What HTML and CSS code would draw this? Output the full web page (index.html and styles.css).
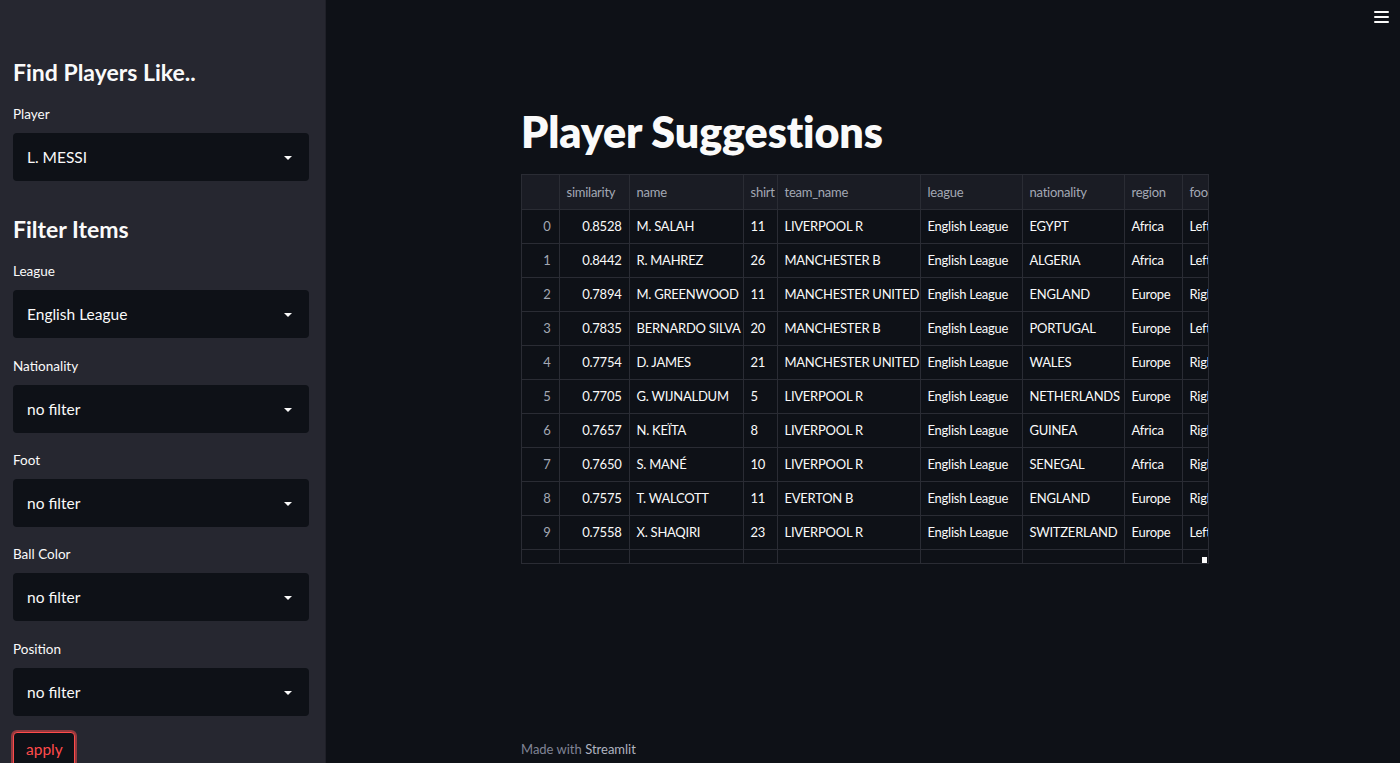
FILE: index.html
```html
<!DOCTYPE html>
<html>
<head>
<meta charset="utf-8">
<link rel="stylesheet" href="styles.css">
</head>
<body>
<div class="app">
  <aside class="sidebar">
    <h2 class="side-h">Find Players Like..</h2>
    <div class="field">
      <div class="label">Player</div>
      <div class="select"><span>L. MESSI</span><i class="caret"></i></div>
    </div>
    <h2 class="side-h side-h2">Filter Items</h2>
    <div class="field">
      <div class="label">League</div>
      <div class="select"><span>English League</span><i class="caret"></i></div>
    </div>
    <div class="field">
      <div class="label">Nationality</div>
      <div class="select"><span>no filter</span><i class="caret"></i></div>
    </div>
    <div class="field">
      <div class="label">Foot</div>
      <div class="select"><span>no filter</span><i class="caret"></i></div>
    </div>
    <div class="field">
      <div class="label">Ball Color</div>
      <div class="select"><span>no filter</span><i class="caret"></i></div>
    </div>
    <div class="field">
      <div class="label">Position</div>
      <div class="select"><span>no filter</span><i class="caret"></i></div>
    </div>
    <div class="btn-wrap"><button class="apply">apply</button></div>
  </aside>
  <main class="main">
    <div class="menu"><span></span><span></span><span></span></div>
    <div class="content">
      <h1 class="title">Player Suggestions</h1>
      <div class="table-wrap">
        <table class="df">
          <colgroup>
            <col style="width:37px"><col style="width:70px"><col style="width:114px"><col style="width:34px"><col style="width:143px"><col style="width:102px"><col style="width:102px"><col style="width:58px"><col style="width:60px">
          </colgroup>
          <thead>
            <tr><th></th><th>similarity</th><th>name</th><th>shirt</th><th>team_name</th><th>league</th><th>nationality</th><th>region</th><th>foot</th></tr>
          </thead>
          <tbody>
            <tr><td class="idx">0</td><td class="num">0.8528</td><td>M. SALAH</td><td>11</td><td>LIVERPOOL R</td><td>English League</td><td>EGYPT</td><td>Africa</td><td>Left</td></tr>
            <tr><td class="idx">1</td><td class="num">0.8442</td><td>R. MAHREZ</td><td>26</td><td>MANCHESTER B</td><td>English League</td><td>ALGERIA</td><td>Africa</td><td>Left</td></tr>
            <tr><td class="idx">2</td><td class="num">0.7894</td><td>M. GREENWOOD</td><td>11</td><td>MANCHESTER UNITED</td><td>English League</td><td>ENGLAND</td><td>Europe</td><td>Right</td></tr>
            <tr><td class="idx">3</td><td class="num">0.7835</td><td>BERNARDO SILVA</td><td>20</td><td>MANCHESTER B</td><td>English League</td><td>PORTUGAL</td><td>Europe</td><td>Left</td></tr>
            <tr><td class="idx">4</td><td class="num">0.7754</td><td>D. JAMES</td><td>21</td><td>MANCHESTER UNITED</td><td>English League</td><td>WALES</td><td>Europe</td><td>Right</td></tr>
            <tr><td class="idx">5</td><td class="num">0.7705</td><td>G. WIJNALDUM</td><td>5</td><td>LIVERPOOL R</td><td>English League</td><td>NETHERLANDS</td><td>Europe</td><td>Right</td></tr>
            <tr><td class="idx">6</td><td class="num">0.7657</td><td>N. KEÏTA</td><td>8</td><td>LIVERPOOL R</td><td>English League</td><td>GUINEA</td><td>Africa</td><td>Right</td></tr>
            <tr><td class="idx">7</td><td class="num">0.7650</td><td>S. MANÉ</td><td>10</td><td>LIVERPOOL R</td><td>English League</td><td>SENEGAL</td><td>Africa</td><td>Right</td></tr>
            <tr><td class="idx">8</td><td class="num">0.7575</td><td>T. WALCOTT</td><td>11</td><td>EVERTON B</td><td>English League</td><td>ENGLAND</td><td>Europe</td><td>Right</td></tr>
            <tr><td class="idx">9</td><td class="num">0.7558</td><td>X. SHAQIRI</td><td>23</td><td>LIVERPOOL R</td><td>English League</td><td>SWITZERLAND</td><td>Europe</td><td>Left</td></tr>
            <tr class="cut"><td class="idx">10</td><td class="num">0.7550</td><td>J. GREALISH</td><td>10</td><td>ASTON VILLA</td><td>English League</td><td>ENGLAND</td><td>Europe</td><td>Right</td></tr>
          </tbody>
        </table>
        <div class="scroll-knob"></div>
      </div>
      <div class="spacer"></div>
      <div class="footer">Made with <b>Streamlit</b></div>
    </div>
  </main>
</div>
</body>
</html>
```

FILE: styles.css
```css
* { box-sizing: border-box; }
html, body { margin: 0; padding: 0; height: 100%; }
body {
  font-family: Lato, "Noto Sans", "Liberation Sans", sans-serif;
  background: #0e1117;
  color: #fafafa;
  overflow: hidden;
}
.app { display: flex; height: 763px; }
.sidebar {
  width: 326px;
  flex: none;
  background: #262730;
  border-right: 1px solid #1f2028;
  padding: 58px 16px 0 13px;
  display: flex;
  flex-direction: column;
  gap: 16.4px;
  overflow: hidden;
}
.side-h {
  margin: 0;
  font-size: 23px;
  line-height: 29px;
  font-weight: 700;
  color: #fafafa;
}
.side-h2 { margin-top: 17px; }
.field { display: flex; flex-direction: column; }
.label {
  font-size: 13.5px;
  line-height: 22px;
  height: 30px;
  color: #fafafa;
}
.select {
  height: 48px;
  background: #0e1117;
  border-radius: 4px;
  display: flex;
  align-items: center;
  justify-content: space-between;
  padding: 0 17px 0 14px;
  font-size: 15.5px;
  color: #fafafa;
}
.caret {
  width: 0; height: 0;
  border-left: 4px solid transparent;
  border-right: 4px solid transparent;
  border-top: 4px solid #fafafa;
  margin-top: 2px;
}
.apply {
  font-family: inherit;
  font-size: 15.5px;
  color: #ff4b4b;
  background: #0e1117;
  border: 1px solid #ff4b4b;
  border-radius: 4px;
  box-shadow: 0 0 0 2px rgba(255, 75, 75, 0.5);
  padding: 6px 12px 10px;
  height: 38px;
  line-height: 20px;
  width: 62px;
}
.main {
  flex: 1;
  position: relative;
  padding-left: 195px;
}
.menu {
  position: absolute;
  right: 11px;
  top: 11px;
  width: 15px;
  display: flex;
  flex-direction: column;
  gap: 3px;
}
.menu span { display: block; height: 2px; background: #fafafa; border-radius: 1px; }
.content {
  width: 688px;
  height: 763px;
  display: flex;
  flex-direction: column;
  padding-top: 107px;
}
.title {
  margin: 0 0 17px;
  font-size: 43px;
  line-height: 50px;
  font-weight: 800;
  color: #fafafa;
  letter-spacing: -0.1px;
}
.table-wrap {
  position: relative;
  width: 688px;
  height: 390px;
  overflow: hidden;
  border: 1px solid #2a2c34;
}
.df {
  border-collapse: collapse;
  table-layout: fixed;
  width: 720px;
  font-size: 13px;
  letter-spacing: -0.25px;
}
.df th, .df td {
  border: 1px solid #2a2c34;
  white-space: nowrap;
  overflow: hidden;
  padding: 0 7px;
  text-align: left;
}
.df tr > :first-child { border-left: none; }
.df thead tr > * { border-top: none; }
.df th {
  height: 34px;
  background: #1a1c24;
  color: #a3a8b4;
  font-weight: 400;
}
.df td { height: 34px; color: #fafafa; background: #0e1117; }
.df td.idx { color: #a3a8b4; text-align: right; padding-right: 8px; }
.df td.num { text-align: right; padding-right: 7px; }
.df tr.cut td { vertical-align: top; padding-top: 12px; }
.scroll-knob {
  position: absolute;
  right: 1px;
  bottom: 0;
  width: 5px;
  height: 6px;
  background: #fafafa;
}
.spacer { flex: 1; }
.footer {
  font-size: 13px;
  color: #808495;
  padding-bottom: 5px;
  line-height: 18px;
}
.footer b { font-weight: 400; color: #b0b4c0; }
```
